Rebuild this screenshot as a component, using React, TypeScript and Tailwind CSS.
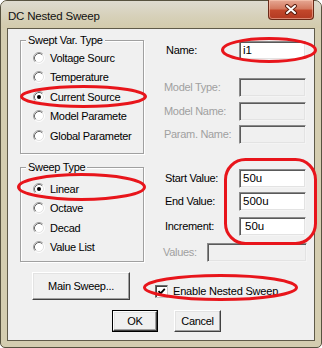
import React from 'react';

// Win7 basic-theme dialog with red hand-drawn annotation marks over it

function Radio({ checked }: { checked?: boolean }) {
  return (
    <svg width="12" height="12" viewBox="0 0 12 12" className="shrink-0">
      <circle cx="6" cy="6" r="5" fill="#fff" />
      <path d="M2.11 9.89 A5.5 5.5 0 0 1 9.89 2.11" stroke="#a0a0a0" fill="none" />
      <path d="M9.89 2.11 A5.5 5.5 0 0 1 2.11 9.89" stroke="#ffffff" fill="none" />
      <path d="M2.82 9.18 A4.5 4.5 0 0 1 9.18 2.82" stroke="#696969" fill="none" />
      <path d="M9.18 2.82 A4.5 4.5 0 0 1 2.82 9.18" stroke="#e3e3e3" fill="none" />
      {checked && <circle cx="6" cy="6" r="2" fill="#000" />}
    </svg>
  );
}

function RadioRow({ label, checked }: { label: string; checked?: boolean }) {
  return (
    <div className="h-[19.5px] flex items-center pl-[12px]">
      <Radio checked={checked} />
      <span className="ml-[5px] whitespace-nowrap">{label}</span>
    </div>
  );
}

function GroupBox({ title, className, children }: { title: string; className: string; children: React.ReactNode }) {
  return (
    <div className={`relative border border-[#a0a0a0] shadow-[inset_1px_1px_0_#fff,1px_1px_0_#fff] ${className}`}>
      <span className="absolute -top-[8px] left-[5px] bg-[#f0f0f0] px-[2px] leading-[14px]">{title}</span>
      {children}
    </div>
  );
}

function Field({ value, disabled, w = 'w-[67px]', indent }: { value?: string; disabled?: boolean; w?: string; indent?: boolean }) {
  return (
    <div
      className={`h-[19px] ${w} border border-t-[#8a8a8a] border-l-[#8a8a8a] border-b-[#f4f4f4] border-r-[#f4f4f4] shadow-[inset_1px_1px_0_#5a5a5a,inset_-1px_-1px_0_#e3e3e3] ${
        disabled ? 'bg-[#f0f0f0]' : 'bg-white'
      } ${indent ? 'pl-[5px]' : 'pl-[3px]'} leading-[17px] text-[11.5px] tracking-normal`}
    >
      {value}
    </div>
  );
}

function Row({ label, value, disabled, mt, lpad = 'pl-[1px]', indent }: { label: string; value?: string; disabled?: boolean; mt: string; lpad?: string; indent?: boolean }) {
  return (
    <div className={`flex items-center ${mt}`}>
      <span className={`w-[76px] ${lpad} whitespace-nowrap ${disabled ? 'text-[#a0a0a0]' : 'text-black'}`}>{label}</span>
      <Field value={value} disabled={disabled} indent={indent} />
    </div>
  );
}

function Btn({ label, w, h, def }: { label: string; w: string; h: string; def?: boolean }) {
  const inner = (
    <div
      className={`${def ? 'w-full h-full' : `${w} ${h}`} flex items-center justify-center border border-t-white border-l-white border-b-[#404040] border-r-[#404040] shadow-[inset_-1px_-1px_0_#a0a0a0,inset_1px_1px_0_#e3e3e3] bg-[#f0f0f0]`}
    >
      {label}
    </div>
  );
  if (!def) return inner;
  return <div className={`${w} ${h} border border-black`}>{inner}</div>;
}

export default function App() {
  return (
    <div className="relative w-[322px] h-[348px] font-['Liberation_Sans',Arial,sans-serif] text-[11px] tracking-[-0.3px] text-black">
      <div className="w-full h-full flex flex-col bg-[#d4cdb0] border border-[#57523f] rounded-t-[7px] rounded-b-[5px]">
        {/* title bar */}
        <div className="h-[27px] flex items-start rounded-t-[6px] bg-[linear-gradient(180deg,#dedbd0_0%,#d6d0b8_60%,#d3cbac_100%)]">
          <span className="mt-[7px] ml-[7px] text-[11.5px] tracking-[-0.2px] text-[#111]">DC Nested Sweep</span>
          <div className="ml-auto mr-[7px] -mt-[1px] w-[46px] h-[20px] rounded-b-[4px] border border-[#6a2a18] border-t-0 bg-[linear-gradient(180deg,#e6a894_0%,#d47a60_45%,#c2472b_55%,#b23a22_100%)] shadow-[inset_0_0_0_1px_rgba(255,210,190,0.5)] flex items-center justify-center">
            <svg width="14" height="11" viewBox="0 0 14 11">
              <path d="M3 2 L11 9 M11 2 L3 9" stroke="#5a1e10" strokeWidth="4" strokeLinecap="round" />
              <path d="M3 2 L11 9 M11 2 L3 9" stroke="#ffffff" strokeWidth="2" strokeLinecap="round" />
            </svg>
          </div>
        </div>

        {/* client area */}
        <div className="flex-1 mx-[6px] mb-[6px] border border-[#5f5a49] bg-[#f0f0f0] pl-[12px] pt-[11px] flex flex-col">
          <div className="flex">
            <div className="w-[124px] flex flex-col">
              <GroupBox title="Swept Var. Type" className="h-[114px] pt-[7px]">
                <RadioRow label="Voltage Sourc" />
                <RadioRow label="Temperature" />
                <RadioRow label="Current Source" checked />
                <RadioRow label="Model Paramete" />
                <RadioRow label="Global Parameter" />
              </GroupBox>
              <GroupBox title="Sweep Type" className="h-[95px] mt-[13px] pt-[11px]">
                <RadioRow label="Linear" checked />
                <RadioRow label="Octave" />
                <RadioRow label="Decad" />
                <RadioRow label="Value List" />
              </GroupBox>
            </div>

            <div className="ml-[19px] w-[144px] flex flex-col">
              <Row label="Name:" value="i1" mt="mt-[1px]" lpad="pl-[3px]" />
              <Row label="Model Type:" disabled mt="mt-[18px]" />
              <Row label="Model Name:" disabled mt="mt-[5px]" />
              <Row label="Param. Name:" disabled mt="mt-[4px]" />
              <Row label="Start Value:" value="50u" mt="mt-[25px]" lpad="pl-[2px]" />
              <Row label="End Value:" value="500u" mt="mt-[4px]" lpad="pl-[2px]" />
              <Row label="Increment:" value="50u" mt="mt-[6px]" lpad="pl-[2px]" indent />
              <div className="flex items-center mt-[7px]">
                <span className="w-[44px] text-[#a0a0a0]">Values:</span>
                <Field disabled w="w-[100px]" />
              </div>
            </div>
          </div>

          <div className="flex items-start mt-[10px]">
            <div className="ml-[12px]">
              <Btn label="Main Sweep..." w="w-[98px]" h="h-[28px]" />
            </div>
            <div className="ml-[25px] mt-[11px] flex items-center">
              <div className="w-[13px] h-[13px] bg-white border border-t-[#6a6a6a] border-l-[#6a6a6a] border-b-[#c8c8c8] border-r-[#c8c8c8] shadow-[inset_1px_1px_0_#404040] flex items-center justify-center">
                <svg width="9" height="9" viewBox="0 0 9 9">
                  <polyline points="1.5,4.2 3.6,6.4 7.8,1.8" stroke="#000" strokeWidth="1.8" fill="none" />
                </svg>
              </div>
              <span className="ml-[5px] tracking-[-0.2px]">Enable Nested Sweep</span>
            </div>
          </div>

          <div className="flex mt-[10px] ml-[92px] gap-[16px]">
            <Btn label="OK" w="w-[46px]" h="h-[22px]" def />
            <Btn label="Cancel" w="w-[47px]" h="h-[22px]" />
          </div>
        </div>
      </div>

      {/* red annotation marks */}
      <svg className="absolute left-0 top-0 pointer-events-none" width="322" height="348" viewBox="0 0 322 348">
        <g stroke="#e8151b" strokeWidth="3" fill="none">
          <ellipse cx="269" cy="50" rx="46.5" ry="11.5" />
          <ellipse cx="83.5" cy="96.5" rx="62" ry="10" />
          <ellipse cx="81.5" cy="187" rx="63" ry="12.5" />
          <rect x="225.5" y="159.5" width="90" height="84" rx="20" />
          <ellipse cx="220.5" cy="287.5" rx="76" ry="12" />
        </g>
      </svg>
    </div>
  );
}
